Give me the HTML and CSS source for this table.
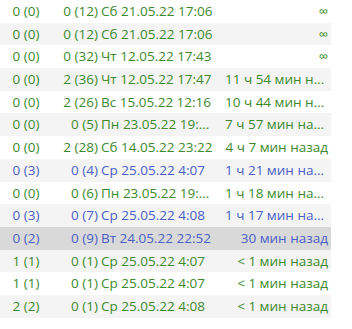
FILE: index.html
```html
<!DOCTYPE html>
<html lang="ru">
<head>
<meta charset="utf-8">
<link rel="stylesheet" href="styles.css">
</head>
<body>
<div class="list">
  <div class="row g"><span class="c1">0 (0)</span><span class="c2">0 (12)</span><span class="c3">Сб 21.05.22 17:06</span><span class="c4 inf">∞</span></div>
  <div class="row g alt"><span class="c1">0 (0)</span><span class="c2">0 (12)</span><span class="c3">Сб 21.05.22 17:06</span><span class="c4 inf">∞</span></div>
  <div class="row g"><span class="c1">0 (0)</span><span class="c2">0 (32)</span><span class="c3">Чт 12.05.22 17:43</span><span class="c4 inf">∞</span></div>
  <div class="row g alt"><span class="c1">0 (0)</span><span class="c2">2 (36)</span><span class="c3">Чт 12.05.22 17:47</span><span class="c4">11 ч 54 мин назад</span></div>
  <div class="row g"><span class="c1">0 (0)</span><span class="c2">2 (26)</span><span class="c3">Вс 15.05.22 12:16</span><span class="c4">10 ч 44 мин назад</span></div>
  <div class="row g alt"><span class="c1">0 (0)</span><span class="c2">0 (5)</span><span class="c3">Пн 23.05.22 19:45</span><span class="c4">7 ч 57 мин назад</span></div>
  <div class="row g"><span class="c1">0 (0)</span><span class="c2">2 (28)</span><span class="c3">Сб 14.05.22 23:22</span><span class="c4">4 ч 7 мин назад</span></div>
  <div class="row b alt"><span class="c1">0 (3)</span><span class="c2">0 (4)</span><span class="c3">Ср 25.05.22 4:07</span><span class="c4">1 ч 21 мин назад</span></div>
  <div class="row g"><span class="c1">0 (0)</span><span class="c2">0 (6)</span><span class="c3">Пн 23.05.22 19:48</span><span class="c4">1 ч 18 мин назад</span></div>
  <div class="row b alt"><span class="c1">0 (3)</span><span class="c2">0 (7)</span><span class="c3">Ср 25.05.22 4:08</span><span class="c4">1 ч 17 мин назад</span></div>
  <div class="row b sel"><span class="c1">0 (2)</span><span class="c2">0 (9)</span><span class="c3">Вт 24.05.22 22:52</span><span class="c4">30 мин назад</span></div>
  <div class="row g alt"><span class="c1">1 (1)</span><span class="c2">0 (1)</span><span class="c3">Ср 25.05.22 4:07</span><span class="c4">&lt; 1 мин назад</span></div>
  <div class="row g"><span class="c1">1 (1)</span><span class="c2">0 (1)</span><span class="c3">Ср 25.05.22 4:07</span><span class="c4">&lt; 1 мин назад</span></div>
  <div class="row g alt"><span class="c1">2 (2)</span><span class="c2">0 (1)</span><span class="c3">Ср 25.05.22 4:08</span><span class="c4">&lt; 1 мин назад</span></div>
</div>
</body>
</html>
```

FILE: styles.css
```css
html, body {
  margin: 0;
  padding: 0;
  background: #ffffff;
}

body {
  font-family: "Open Sans", "Noto Sans", "DejaVu Sans", sans-serif;
  font-size: 13.5px;
}

.list {
  width: 331px;
}

.row {
  display: grid;
  grid-template-columns: 55px 43px 119px 114px;
  height: 22.7px;
  line-height: 23.6px;
  white-space: nowrap;
}

.row.alt {
  background: #f4f4f4;
}

.row.sel {
  background: #d9d9d9;
}

.row.g {
  color: #3c8a2c;
}

.row.b {
  color: #4a60c6;
}

.row span {
  overflow: hidden;
  text-overflow: ellipsis;
}

.c1 {
  padding-left: 12.5px;
}

.c2 {
  text-align: right;
}

.c3 {
  padding-left: 3px;
  padding-right: 4px;
}

.c4 {
  text-align: right;
  padding-left: 8px;
  padding-right: 3px;
}

.inf {
  font-size: 13px;
}
```
